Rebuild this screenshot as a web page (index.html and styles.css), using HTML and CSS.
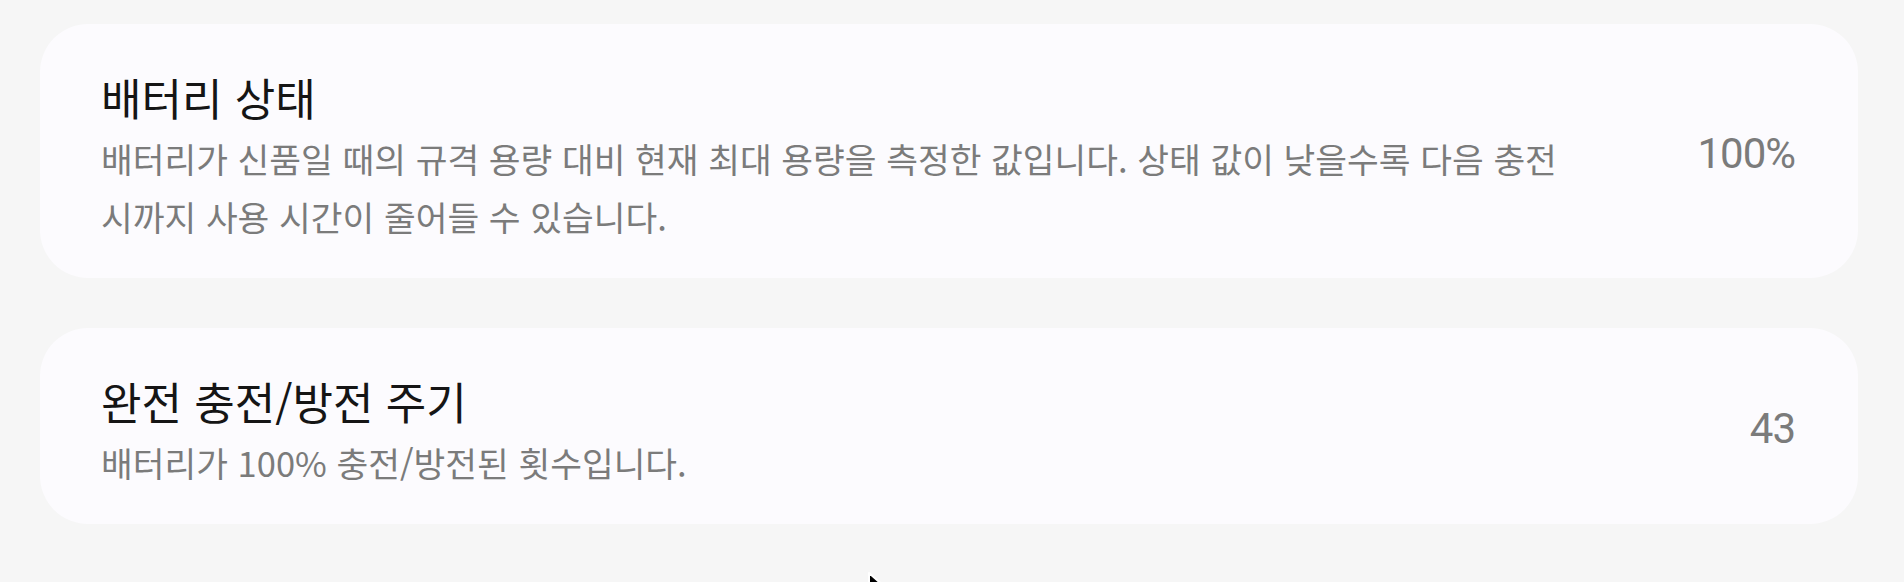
FILE: index.html
```html
<!DOCTYPE html>
<html lang="ko">
<head>
<meta charset="utf-8">
<title>배터리 정보</title>
<link rel="stylesheet" href="styles.css">
</head>
<body>
<main class="page">
  <section class="card">
    <div class="card-text">
      <h2 class="card-title">배터리 상태</h2>
      <p class="card-desc">배터리가 신품일 때의 규격 용량 대비 현재 최대 용량을 측정한 값입니다. 상태 값이 낮을수록 다음 충전 시까지 사용 시간이 줄어들 수 있습니다.</p>
    </div>
    <div class="card-value">100%</div>
  </section>
  <section class="card">
    <div class="card-text">
      <h2 class="card-title">완전 충전/방전 주기</h2>
      <p class="card-desc">배터리가 100% 충전/방전된 횟수입니다.</p>
    </div>
    <div class="card-value">43</div>
  </section>
</main>
<svg class="cursor" width="24" height="30" viewBox="0 0 24 30" aria-hidden="true">
  <path d="M2 2 L2 24 L7.5 18.5 L11 27 L14.5 25.5 L11 17 L19 17 Z" fill="#000" stroke="#fff" stroke-width="2" stroke-linejoin="round"/>
</svg>
</body>
</html>
```

FILE: styles.css
```css
html, body {
  margin: 0;
  padding: 0;
  background: #f6f6f6;
  overflow: hidden;
}

body {
  font-family: "Noto Sans CJK KR", "Noto Sans", sans-serif;
  position: relative;
  height: 582px;
}

.page {
  padding: 24px 46px 0 40px;
  display: flex;
  flex-direction: column;
  gap: 50px;
}

.card {
  background: #fcfbfe;
  border-radius: 48px;
  padding: 44px 63px 33px 61px;
  display: flex;
  align-items: center;
  gap: 60px;
}

.card-text {
  flex: 1;
  min-width: 0;
  max-width: 1520px;
  word-break: keep-all;
}

.card-title {
  margin: 0;
  font-size: 44px;
  line-height: 58px;
  font-weight: 400;
  color: #151515;
}

.card-desc {
  margin: 3px 0 0;
  font-size: 34.5px;
  line-height: 58px;
  font-weight: 400;
  color: #7b7b7b;
}

.card-value {
  margin-left: auto;
  margin-bottom: 7px;
  font-family: "Roboto", "Liberation Sans", sans-serif;
  font-size: 42px;
  color: #7b7b7b;
  letter-spacing: -1px;
  white-space: nowrap;
}

.cursor {
  position: absolute;
  left: 867px;
  top: 571px;
}
```
